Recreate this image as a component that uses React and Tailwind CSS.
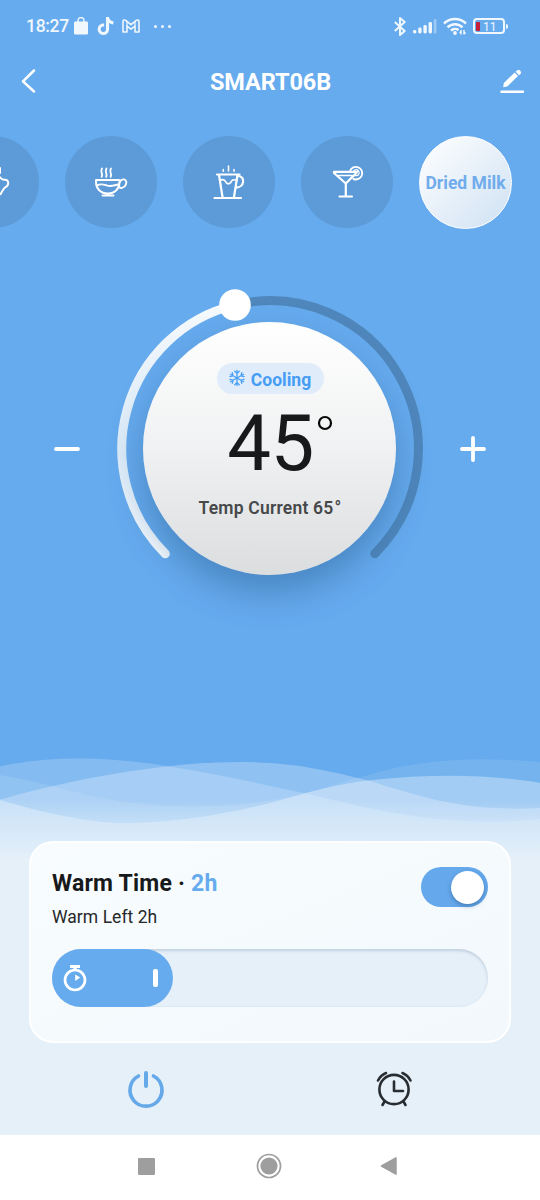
import { FaTiktok } from "react-icons/fa";

function StatusBar() {
  return (
    <div className="flex h-[52px] items-center justify-between pl-[26px] pr-[32px] text-white/90">
      <div className="flex items-center">
        <span className="mt-[2px] w-[44px] text-[17.500px] font-medium leading-none tracking-[-0.300px]">18:27</span>
        <svg width="16" height="18" viewBox="0 0 16 18" className="ml-[3px]">
          <path d="M5 5V3.500a3 3 0 0 1 6 0V5" fill="none" stroke="currentColor" strokeWidth="1.400" />
          <rect x="1" y="4.500" width="14" height="13" rx="1" fill="currentColor" />
        </svg>
        <FaTiktok className="ml-[8px] h-[18px] w-[17px]" />
        <svg width="18" height="14" viewBox="0 0 18 14" className="ml-[8px]">
          <path d="M1 2.400C1 1 2.600.500 3.700 1.400L9 5.600l5.300-4.200C15.400.500 17 1 17 2.400V13h-4V7L9 10.200 5 7v6H1z" fill="none" stroke="currentColor" strokeWidth="1.600" strokeLinejoin="round" />
          <path d="M5 7V2.500M13 7V2.500" stroke="currentColor" strokeWidth="1.200" />
        </svg>
        <div className="ml-[14px] flex gap-[4px]">
          <span className="size-[3px] rounded-full bg-white/90" />
          <span className="size-[3px] rounded-full bg-white/90" />
          <span className="size-[3px] rounded-full bg-white/90" />
        </div>
      </div>

      <div className="flex items-center">
        <svg width="12" height="19" viewBox="0 0 12 19" fill="none" stroke="currentColor" strokeWidth="2">
          <path d="M.8 5l9.900 9L6 18V1l4.700 4L.8 14" strokeLinejoin="round" />
        </svg>
        <svg width="24" height="16" viewBox="0 0 24 16" className="ml-[7px]" fill="currentColor">
          <rect x="0" y="12" width="3.400" height="3.500" rx="1.400" />
          <rect x="5.200" y="9.500" width="3.400" height="6" rx="1.400" />
          <rect x="10.400" y="7" width="3.400" height="8.500" rx="1.400" />
          <rect x="15.600" y="4" width="3.400" height="11.500" rx="1.400" />
          <rect x="20.800" y="1" width="2.600" height="14.500" rx="1.200" opacity="0.4" />
        </svg>
        <svg width="24" height="19" viewBox="0 0 24 19" className="ml-[6px]" fill="none" stroke="currentColor" strokeWidth="2.500">
          <path d="M1 6.500a15.500 15.500 0 0 1 22 0M4.500 10.300a10.500 10.500 0 0 1 15 0M8 13.700a5.800 5.800 0 0 1 7.500-.6" />
          <circle cx="12" cy="16" r="1.900" fill="currentColor" stroke="none" />
          <path d="M18 13v4.500M21 13v4.500" strokeWidth="1.500" />
          <path d="M16.300 15.300h1.700M21 16h1.700" strokeWidth="1.300" />
        </svg>
        <div className="ml-[6px] flex h-[16px] w-[32px] items-center rounded-[4px] border-2 border-white/90 pl-[1px]">
          <span className="h-[9px] w-[4px] rounded-[1px] bg-[#c4203a]" />
          <span className="ml-[3px] mt-[1px] w-[14px] text-[12px] leading-none">11</span>
        </div>
        <span className="ml-[1px] h-[5px] w-[2px] rounded-r bg-white/90" />
      </div>
    </div>
  );
}

function Header() {
  return (
    <div className="flex h-[60px] items-center justify-between pl-[21px] pr-[16px] text-white">
      <svg width="16" height="24" viewBox="0 0 16 24" fill="none" stroke="currentColor" strokeWidth="2.500" strokeLinecap="round" strokeLinejoin="round" className="mb-[3px]">
        <path d="M13 1.500L2 12.300 13 22.500" />
      </svg>
      <h1 className="ml-[4px] mt-[2px] text-[23.500px] font-bold leading-none tracking-[-0.100px]">SMART06B</h1>
      <svg width="24" height="24" viewBox="0 0 24 24" className="mb-[3px]">
        <path d="M3.200 18.300L3.800 14 14.600 3.600l3.400 3.500L7.200 17.600z" fill="currentColor" />
        <path d="M15.600 2.700L17 1.400a2.200 2.200 0 0 1 3 0l.5.500a2.200 2.200 0 0 1 0 3L19 6.200z" fill="currentColor" />
        <path d="M1.500 22.700h21.500" stroke="currentColor" strokeWidth="2.500" strokeLinecap="round" />
      </svg>
    </div>
  );
}

function Preset({ children }) {
  return (
    <div className="flex size-[92px] shrink-0 items-center justify-center rounded-full bg-[#5d9bd8] text-white">
      {children}
    </div>
  );
}

function Presets() {
  return (
    <div className="mt-[24px] flex h-[93px] overflow-hidden">
      <div className="-ml-[53px] flex gap-[26px]">
        <Preset>
          <svg width="36" height="36" viewBox="0 0 36 36" fill="none" stroke="currentColor" strokeWidth="2" strokeLinecap="round">
            <path d="M23.500 12c3 2.500 3.300 4 6 3.700 5-.3 4.500 6 1 7.500-2 1-2.500 3-5 7M4 13h19M6 13c-3 6-1 14 5 17h10M25 4v5" />
          </svg>
        </Preset>
        <Preset>
          <svg width="36" height="36" viewBox="0 0 36 36" fill="none" stroke="currentColor" strokeWidth="1.900" strokeLinecap="round" strokeLinejoin="round">
            <path d="M3 16h23.500v2.200c0 6.300-4.500 11.300-11.700 11.300S3 24.500 3 18.200zM9.500 31.500h11" />
            <path d="M26.500 18.500c1-3.300 4.500-3.800 6-2.300 1.800 1.900.6 6.800-3.500 7.700-2.200.4-3.700-.9-3.500-3.200" />
            <path d="M4 21.500c4.500-2.500 7-.8 10.500.2 4 1.100 7.500-.8 11-1.200" />
            <path d="M9 4.500c-2.500 3 1.500 5-.3 8.300M13.500 4.500c-2.500 3 1.500 5-.3 8.300M18 4.500c-2.500 3 1.500 5-.3 8.300" />
          </svg>
        </Preset>
        <Preset>
          <svg width="36" height="36" viewBox="0 0 36 36" fill="none" stroke="currentColor" strokeWidth="2.200" strokeLinecap="round">
            <path d="M6 10.500h22.500M8 11l3.500 22M26.500 11L23 33M3.500 34h26.500" />
            <path d="M26.500 12c8.500 0 7 11.500-1.500 11.700" />
            <path d="M9 16.800c1.500-1.500 4-1.500 5 0 .8 1.400 1.200 3 3.400 3s2.500-1.800 3.400-3c1-1.200 3.400-1.200 5 0" strokeWidth="1.700" />
            <path d="M17.500 2v5M12.300 5.500v1.800M23 5.500v1.800" strokeWidth="1.600" />
          </svg>
        </Preset>
        <Preset>
          <svg width="36" height="36" viewBox="0 0 36 36" fill="none" stroke="currentColor" strokeWidth="2.200" strokeLinecap="round" strokeLinejoin="round">
            <path d="M5 7.800h23c-.5 1.300-3.500 4-6 6.500L16.800 19.500 5 9zM16.800 19.500v13M10.500 32.500h12.500" />
            <path d="M9.500 11.500h13.500" strokeWidth="1.500" />
            <path d="M21 7a6.300 6.300 0 1 1 3.500 8" strokeWidth="1.900" />
            <path d="M24.300 7.700a3 3 0 1 1 1.800 3.800" strokeWidth="1.200" />
          </svg>
        </Preset>
        <div className="flex size-[93px] shrink-0 items-center justify-center rounded-full border border-white bg-linear-to-br from-white to-[#cfe1f3] pt-[2px]">
          <span className="whitespace-nowrap text-[17.500px] font-bold text-[#70aceb]">Dried Milk</span>
        </div>
      </div>
    </div>
  );
}

function Snowflake() {
  const arms = [0, 60, 120, 180, 240, 300];
  return (
    <svg width="16" height="18" viewBox="-8 -9 16 18" fill="none" stroke="#459df5" strokeWidth="1.250" strokeLinecap="round">
      {arms.map((a) => (
        <path key={a} d="M0 0V-7.600M-2.300-6.800L0-4.600 2.300-6.800" transform={`rotate(${a})`} />
      ))}
    </svg>
  );
}

function Dial() {
  return (
    <div className="mt-[66px] flex h-[308px] items-center justify-between px-[54px] text-white">
      <svg width="26" height="26" viewBox="0 0 26 26">
        <path d="M2 13h22" stroke="currentColor" strokeWidth="3.800" strokeLinecap="round" />
      </svg>
      <div className="relative flex size-[308px] items-center justify-center">
        <svg width="308" height="308" viewBox="-154 -154 308 308" fill="none" strokeLinecap="round" className="absolute inset-0 overflow-visible">
          <defs>
            <linearGradient id="track" x1="0" y1="0" x2="0" y2="1">
              <stop offset="0" stopColor="#f6fafd" />
              <stop offset="0.600" stopColor="#dcebf8" />
              <stop offset="1" stopColor="#f8fcff" />
            </linearGradient>
          </defs>
          <path d="M-35-144A148 148 0 0 1 104.700 104.700" stroke="#4f87bc" strokeWidth="9" />
          <path d="M-104.700 104.700A148 148 0 0 1-35-144" stroke="url(#track)" strokeWidth="9" />
        </svg>
        <div className="z-10 mb-[2px] mr-[1px] flex size-[253px] flex-col items-center rounded-full bg-linear-to-b from-white via-[#f0f1f2] to-[#dcddde] pl-[1px] shadow-[0_18px_34px_rgba(35,85,135,0.420)]">
          <div className="mt-[41px] flex h-[31px] w-[107px] items-center justify-center gap-[6px] rounded-full bg-[#e0ecfa]">
            <Snowflake />
            <span className="mt-[5px] text-[17.500px] font-bold leading-none text-[#459df5]">Cooling</span>
          </div>
          <div className="mt-[10px] flex h-[80px] items-start text-[#17191b]">
            <span className="ml-[20px] text-[78px] leading-[80px] tracking-[-0.500px]">45</span>
            <svg width="16" height="16" viewBox="0 0 16 16" className="ml-[3px] mt-[11px]">
              <circle cx="8" cy="8" r="6" fill="none" stroke="#050505" strokeWidth="2.200" />
            </svg>
          </div>
          <div className="mt-[14px] whitespace-nowrap text-[17.500px] font-semibold leading-[20px] tracking-[0.200px] text-[#46484a]">
            Temp Current 65<span className="ml-[1px]">°</span>
          </div>
        </div>
        <svg width="34" height="34" viewBox="0 0 34 34" className="absolute left-[101.500px] top-[-7px] z-20">
          <circle cx="17" cy="17" r="15.800" fill="#fff" />
        </svg>
      </div>
      <svg width="26" height="26" viewBox="0 0 26 26">
        <path d="M2 13h22M13 2v22" stroke="currentColor" strokeWidth="3.800" strokeLinecap="round" />
      </svg>
    </div>
  );
}

function Waves() {
  return (
    <svg width="540" height="110" viewBox="0 750 540 110" className="mt-[147px] block shrink-0">
      <defs>
        <linearGradient id="fade" x1="0" y1="0" x2="0" y2="1">
          <stop offset="0" stopColor="#e5f0f9" stopOpacity="0" />
          <stop offset="1" stopColor="#e5f0f9" />
        </linearGradient>
      </defs>
      <path d="M0 766.500C60 752.500 130 759.500 168 766.300C215 774 260 783.500 305 793.300C370 809 450 829.500 540 819V860H0z" fill="#fff" opacity="0.200" />
      <path d="M0 775C30 780 55 786.500 80 793C150 810.500 230 811.500 305 793.300C335 785.500 350 779 365 776C420 758.500 480 756.500 540 762V860H0z" fill="#fff" opacity="0.100" />
      <path d="M0 799.500C60 783 115 772 168 766.300C220 760.500 260 760.500 300 766C330 771 350 776 372 781.500C430 800 470 811.500 540 808V860H0z" fill="#fff" opacity="0.270" />
      <path d="M0 800C60 817.500 100 823.500 128 823C190 822.500 250 809.500 305 793.300C325 787.500 350 782.500 372 780C430 774 490 774 540 783V860H0z" fill="#fff" opacity="0.330" />
      <rect x="0" y="800" width="540" height="60" fill="url(#fade)" />
    </svg>
  );
}

function WarmCard() {
  return (
    <div className="mx-[29px] -mt-[19px] h-[202px] rounded-[24px] border-2 border-white bg-linear-to-br from-[#f8fcfe] to-[#f2f8fc] px-[21px] pt-[24px]">
      <div className="flex justify-between">
        <div>
          <div className="mt-[3px] text-[23px] font-bold leading-[28px] tracking-[0.200px] text-[#17191b]">
            Warm Time · <span className="text-[#66abee]">2h</span>
          </div>
          <div className="mt-[8px] text-[17.500px] leading-[22px] tracking-[0.050px] text-[#26282b]">Warm Left 2h</div>
        </div>
        <div className="flex h-[40px] w-[67px] items-center justify-end rounded-full bg-[#65a9ec] pr-[4px]">
          <span className="size-[33px] rounded-full bg-white shadow-[0_2px_4px_rgba(40,80,130,0.500)]" />
        </div>
      </div>
      <div className="mt-[21px] h-[58px] w-[436px] rounded-full bg-[#e5f0f9] shadow-[inset_0_2px_3px_rgba(70,95,135,0.220),inset_0_-1px_1px_rgba(70,95,135,0.040)]">
        <div className="flex h-[58px] w-[121px] items-center justify-between rounded-full bg-[#66abee] pl-[10px] pr-[15px]">
          <svg width="26" height="30" viewBox="0 0 26 30">
            <path d="M8 3.500h10M13 3v4" stroke="#fff" strokeWidth="3.200" />
            <circle cx="13" cy="17" r="10" fill="none" stroke="#fff" strokeWidth="2.700" />
            <path d="M13.200 11.500l5 3-5 3.500z" fill="#fff" />
          </svg>
          <span className="h-[18px] w-[5px] rounded-[2px] bg-white" />
        </div>
      </div>
    </div>
  );
}

function BottomActions() {
  return (
    <div className="flex h-[92px] items-center justify-between px-[126px]">
      <svg width="40" height="40" viewBox="0 0 40 40" fill="none" stroke="#66a9e9" strokeLinecap="round">
        <path d="M12.500 7A16 16 0 1 0 27.500 7" strokeWidth="3.600" />
        <path d="M20 4v13" strokeWidth="4" />
      </svg>
      <svg width="40" height="40" viewBox="0 0 40 40" fill="none" stroke="#282d31" strokeWidth="2.600" strokeLinecap="round">
        <circle cx="20" cy="20.500" r="14.600" />
        <path d="M20 12.500V22h9" strokeLinejoin="round" />
        <path d="M4 11.500C6 7.500 8.500 5.500 12 4M28.500 4C32 5.500 34.500 7.500 36.500 11.500" />
        <path d="M10.500 32.500l-2 3.500M29.500 32.500l2 3.500" />
      </svg>
    </div>
  );
}

function NavBar() {
  return (
    <div className="flex h-[65px] items-center justify-between bg-white pl-[138px] pr-[142px] pb-[3px] text-[#9e9e9e]">
      <span className="size-[17px] rounded-[1px] bg-[#9e9e9e]" />
      <svg width="26" height="26" viewBox="0 0 26 26" className="ml-[2px]">
        <circle cx="13" cy="13" r="11.500" fill="none" stroke="currentColor" strokeWidth="1.700" />
        <circle cx="13" cy="13" r="8.600" fill="currentColor" />
      </svg>
      <svg width="18" height="20" viewBox="0 0 18 20">
        <path d="M16 1.800v16.400L1.500 10z" fill="currentColor" stroke="currentColor" strokeWidth="1.500" strokeLinejoin="round" />
      </svg>
    </div>
  );
}

export default function App() {
  return (
    <div className="flex h-[1200px] w-[540px] flex-col overflow-hidden bg-[#e5f0f9] font-['Roboto',sans-serif]">
      <div className="flex h-[860px] shrink-0 flex-col bg-[#66abee]">
        <StatusBar />
        <Header />
        <Presets />
        <Dial />
        <Waves />
      </div>
      <WarmCard />
      <BottomActions />
      <NavBar />
    </div>
  );
}
